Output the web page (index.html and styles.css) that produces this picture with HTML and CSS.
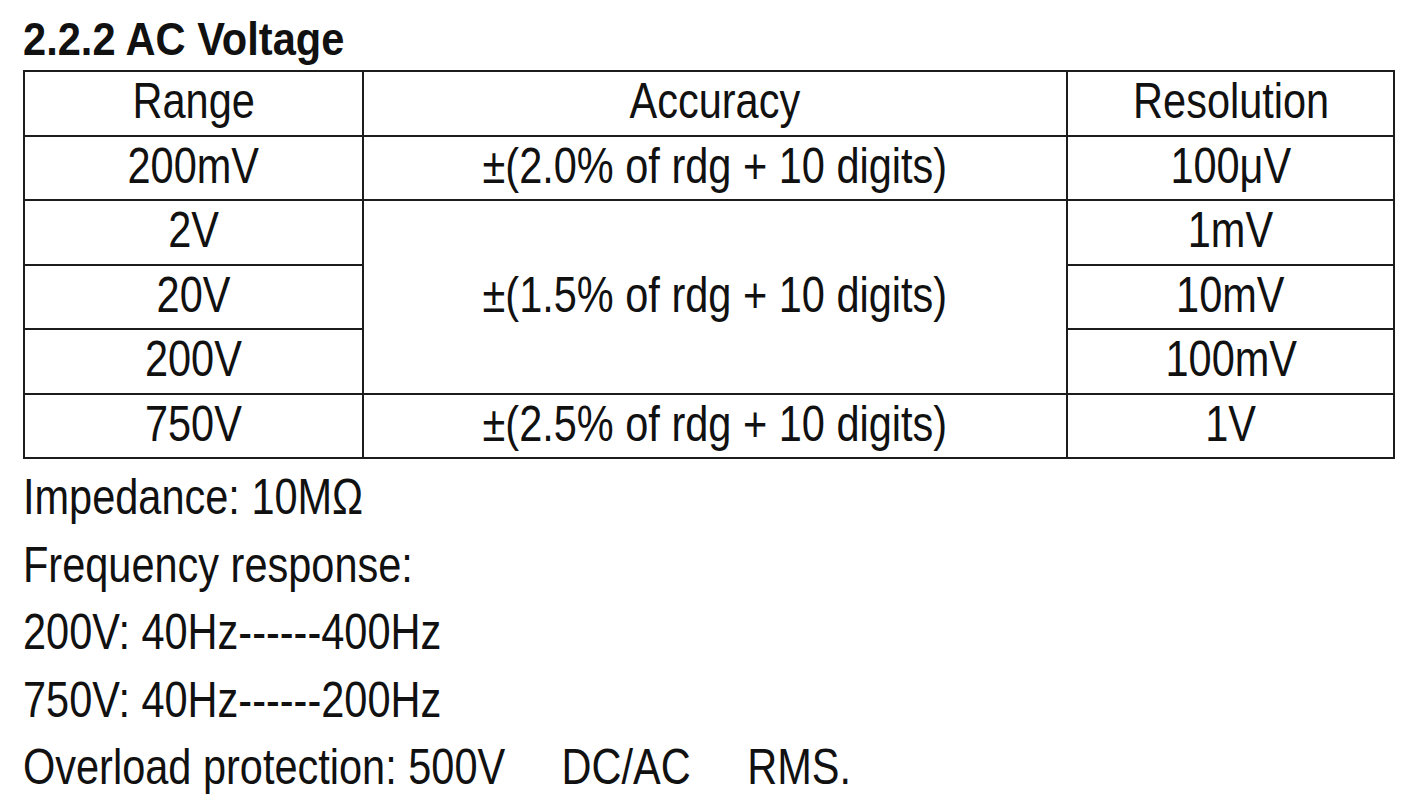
FILE: index.html
```html
<!DOCTYPE html>
<html lang="en">
<head>
    <meta charset="utf-8">
    <title>2.2.2 AC Voltage</title>
    <link rel="stylesheet" href="styles.css">
</head>
<body>
    <div class="spec">
        <h2 class="title"><span class="nar">2.2.2 AC Voltage</span></h2>
        <table class="grid">
            <tr>
                <td class="c-range"><span class="nar">Range</span></td>
                <td class="c-acc"><span class="nar">Accuracy</span></td>
                <td class="c-res"><span class="nar">Resolution</span></td>
            </tr>
            <tr>
                <td><span class="nar">200mV</span></td>
                <td><span class="nar">±(2.0% of rdg + 10 digits)</span></td>
                <td><span class="nar">100μV</span></td>
            </tr>
            <tr>
                <td><span class="nar">2V</span></td>
                <td rowspan="3"><span class="nar">±(1.5% of rdg + 10 digits)</span></td>
                <td><span class="nar">1mV</span></td>
            </tr>
            <tr>
                <td><span class="nar">20V</span></td>
                <td><span class="nar">10mV</span></td>
            </tr>
            <tr>
                <td><span class="nar">200V</span></td>
                <td><span class="nar">100mV</span></td>
            </tr>
            <tr>
                <td><span class="nar">750V</span></td>
                <td><span class="nar">±(2.5% of rdg + 10 digits)</span></td>
                <td><span class="nar">1V</span></td>
            </tr>
        </table>
        <div class="notes">
            <p><span class="nar">Impedance: 10MΩ</span></p>
            <p><span class="nar">Frequency response:</span></p>
            <p><span class="nar">200V: 40Hz------400Hz</span></p>
            <p><span class="nar">750V: 40Hz------200Hz</span></p>
            <p><span class="nar">Overload protection: 500V<span class="gap"></span>DC/AC<span class="gap"></span>RMS.</span></p>
        </div>
    </div>
</body>
</html>
```

FILE: styles.css
```css
body {
    margin: 0;
    background: #fff;
    color: #111;
    font-family: "Liberation Sans", Arial, sans-serif;
}

/* no narrow face installed, so squeeze the regular one */
.nar {
    display: inline-block;
    white-space: nowrap;
    transform: scaleX(0.83);
}

.spec {
    padding: 15px 0 0 23px;
    width: 1372px;
}

.title {
    margin: 0 0 7px 0;
    font-size: 47px;
    font-weight: bold;
    line-height: 48px;
}

.title .nar {
    transform: scaleX(0.885);
    transform-origin: left center;
}

.grid {
    border-collapse: collapse;
    width: 1372px;
    font-size: 50px;
}

.grid td {
    border: 2px solid #1c1c1c;
    height: 62.5px;
    padding: 0;
    text-align: center;
    vertical-align: middle;
    line-height: 56px;
}

.grid td .nar {
    transform: translateY(-2px) scaleX(0.83);
}

.c-range {
    width: 340px;
}

.c-acc {
    width: 705px;
}

.c-res {
    width: 326px;
}

.notes {
    margin-top: 5px;
    font-size: 50px;
}

.notes p {
    margin: 0;
    line-height: 67.5px;
}

.notes .nar {
    transform-origin: left center;
}

.gap {
    display: inline-block;
    width: 68px;
}
```
